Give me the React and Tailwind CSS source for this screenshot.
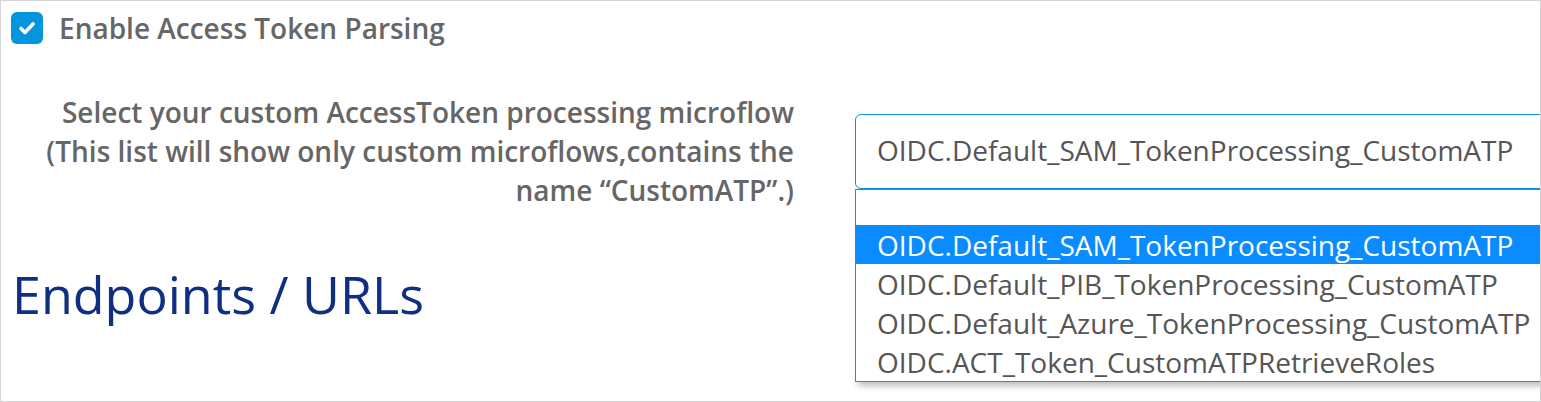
import React from 'react';

const options = [
  '',
  'OIDC.Default_SAM_TokenProcessing_CustomATP',
  'OIDC.Default_PIB_TokenProcessing_CustomATP',
  'OIDC.Default_Azure_TokenProcessing_CustomATP',
  'OIDC.ACT_Token_CustomATPRetrieveRoles',
];

const CheckBox = () => (
  <div className="w-8 h-8 rounded-[6px] bg-[#0595de] flex items-center justify-center shrink-0">
    <svg width="20" height="20" viewBox="0 0 20 20" fill="none">
      <path d="M4 10.5l4 4 8-8.5" stroke="white" strokeWidth="3.6" strokeLinecap="round" strokeLinejoin="round" />
    </svg>
  </div>
);

const App = () => {
  const selected = 1;
  return (
    <div
      className="w-[1541px] h-[402px] border border-[#d4d4d4] bg-white overflow-hidden"
      style={{ fontFamily: '"Open Sans", sans-serif' }}
    >
      <div className="flex items-center gap-[16px] pl-[10px] pt-[10px]">
        <CheckBox />
        <span className="text-[28px] font-semibold text-[#666666] leading-[34px]">Enable Access Token Parsing</span>
      </div>

      <div className="flex mt-[48px]">
        <div className="w-[793px] shrink-0 text-right text-[28px] font-semibold text-[#666666] leading-[39px] whitespace-nowrap">
          Select your custom AccessToken processing microflow
          <br />
          (This list will show only custom microflows,contains the
          <br />
          name “CustomATP”.)
        </div>
        <div className="relative ml-[61px] w-[700px] shrink-0 mt-[21px]">
          <div className="h-[75px] border border-[#0595de] rounded-[6px] flex items-center pl-[21px] pb-[4px] text-[28px] text-[#555555]">
            OIDC.Default_SAM_TokenProcessing_CustomATP
          </div>
          <div className="absolute left-0 top-[75px] w-[686px] bg-white border border-[#767676] shadow-[3px_4px_6px_rgba(0,0,0,0.25)] z-10">
            {options.map((o, i) => (
              <div
                key={i}
                className={
                  (i === 0 ? 'h-[35px] ' : 'h-[39px] ') +
                  'pl-[21px] flex items-center text-[28px] ' +
                  (i === selected ? 'bg-[#0a8bff] text-white' : 'text-[#555555]')
                }
              >
                {o}
              </div>
            ))}
          </div>
        </div>
      </div>

      <h2 className="pl-[11px] mt-[54px] text-[52px] leading-[60px] text-[#0f2f83]">Endpoints / URLs</h2>
    </div>
  );
};

export default App;
